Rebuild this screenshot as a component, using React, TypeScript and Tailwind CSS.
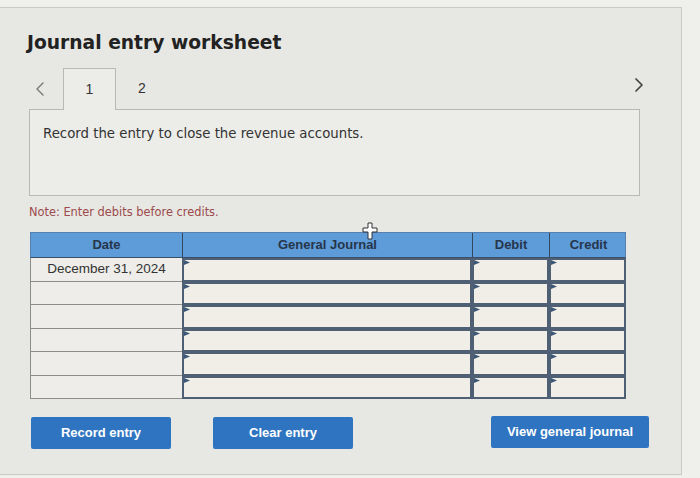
import { ChevronLeft, ChevronRight } from "lucide-react";

const rows = ["December 31, 2024", "", "", "", "", ""];

function Marker() {
  return (
    <svg className="absolute left-0 top-0" width="6" height="6" viewBox="0 0 6 6">
      <path d="M0 0 L6 2.5 L0 5 Z" fill="#3d5877" />
    </svg>
  );
}

function InputCell() {
  return (
    <div className="relative h-full border-2 border-[#4f6075] bg-[#f1eee8]">
      <Marker />
    </div>
  );
}

export default function App() {
  return (
    <div className="relative h-[478px] w-[700px] overflow-hidden bg-[#efefeb] pt-[7px] font-['DejaVu_Sans',sans-serif]">
      <div className="h-[468px] w-[682px] border-t border-r border-b border-[#c9c9c5] bg-[#e7e7e3]">
        <h1 className="pl-[27px] pt-[22px] text-[18.7px] font-bold leading-[26px] text-[#222]">
          Journal entry worksheet
        </h1>

        {/* tabs */}
        <div className="mt-[12px] flex h-[41px] items-center pl-[28px] pr-[30px] font-['Liberation_Sans',sans-serif]">
          <ChevronLeft className="h-[24px] w-[24px] text-[#777]" strokeWidth={1.4} />
          <div className="relative ml-[11px] flex h-[41px] w-[53px] items-center justify-center border-x border-t border-[#b8b8b4] bg-[#ecece8] text-[14px] text-[#333]">
            1
            <div className="absolute -bottom-px left-0 right-0 h-[2px] bg-[#ecece8]" />
          </div>
          <div className="ml-[22px] text-[14px] text-[#333]">2</div>
          <ChevronRight className="ml-auto h-[24px] w-[24px] -translate-y-[4px] text-[#444]" strokeWidth={1.7} />
        </div>

        <div className="ml-[29px] h-[87px] w-[611px] border border-[#b8b8b4] bg-[#ecece8] pl-[13px] pt-[14px] text-[13.3px] text-[#333]">
          Record the entry to close the revenue accounts.
        </div>

        <p className="ml-[29px] mt-[8px] text-[11.4px] text-[#9c4a4c]">Note: Enter debits before credits.</p>

        {/* table */}
        <div className="relative ml-[30px] mt-[11px] w-[596px] font-['Liberation_Sans',sans-serif]">
          <div className="grid h-[26px] grid-cols-[152px_290px_77px_77px] border border-[#5680b0] border-b-[#3a4f68] bg-[#5e9bd9] text-[13px] font-bold text-[#26364a]">
            <div className="flex items-center justify-center border-r border-[#34485f]">Date</div>
            <div className="flex items-center justify-center border-r border-[#34485f]">General Journal</div>
            <div className="flex items-center justify-center border-r border-[#34485f]">Debit</div>
            <div className="flex items-center justify-center">Credit</div>
          </div>
          {rows.map((d, i) => (
            <div key={i} className="grid h-[23.5px] grid-cols-[152px_290px_77px_77px]">
              <div className="flex items-center justify-center border-b border-l border-[#8c8c8a] bg-[#eeede9] text-[13.5px] text-[#333]">
                {d}
              </div>
              <InputCell />
              <InputCell />
              <InputCell />
            </div>
          ))}
          <svg className="absolute left-[332px] top-[-10px]" width="16" height="18" viewBox="0 0 16 18">
            <path
              d="M6 1 H10 V6 H15 V10 H10 V17 H6 V10 H1 V6 H6 Z"
              fill="#fff"
              stroke="#333"
              strokeWidth="1"
            />
          </svg>
        </div>

        {/* buttons */}
        <div className="ml-[31px] mt-[18px] flex font-['Liberation_Sans',sans-serif] text-[13px] font-bold text-white">
          <button className="h-[32px] w-[140px] rounded-[2px] bg-[#2f74c1]">Record entry</button>
          <button className="ml-[42px] h-[32px] w-[140px] rounded-[2px] bg-[#2f74c1]">Clear entry</button>
          <button className="ml-auto mr-[32px] h-[32px] w-[158px] -translate-y-[1px] rounded-[2px] bg-[#2f74c1]">
            View general journal
          </button>
        </div>
      </div>
    </div>
  );
}
